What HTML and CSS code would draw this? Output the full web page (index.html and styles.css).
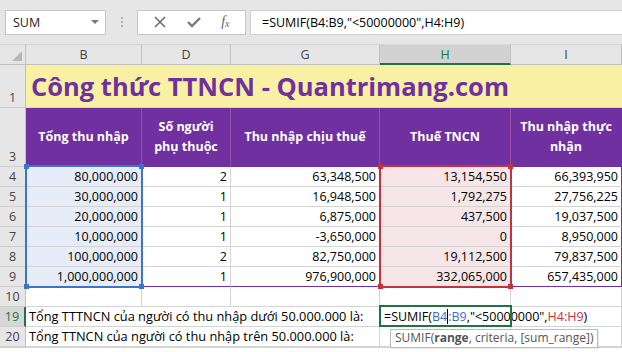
FILE: index.html
```html
<!DOCTYPE html>
<html lang="vi">
<head>
  <meta charset="UTF-8">
  <title>SUMIF - TTNCN</title>
  <link rel="stylesheet" href="styles.css">
</head>
<body>

<div class="formula-bar">
  <div class="name-box">
    <span>SUM</span>
    <span class="caret-down"></span>
  </div>
  <div class="grip"><i></i><i></i><i></i></div>
  <div class="fx-buttons">
    <svg class="btn-icon" width="14" height="14" viewBox="0 0 14 14"><path d="M2 2 L12 12 M12 2 L2 12" stroke="#6f6f6f" stroke-width="1.6" fill="none"/></svg>
    <svg class="btn-icon" width="16" height="14" viewBox="0 0 16 14"><path d="M2 7 L6 11 L14 3" stroke="#7a7a7a" stroke-width="2.4" fill="none"/></svg>
    <span class="fx">f<sub>x</sub></span>
  </div>
  <div class="formula-input">=SUMIF(B4:B9,"&lt;50000000",H4:H9)</div>
</div>

<div class="sheet">
  <!-- column headers -->
  <div class="corner"><span class="tri"></span></div>
  <div class="ch">B</div>
  <div class="ch">D</div>
  <div class="ch">G</div>
  <div class="ch ch-sel">H</div>
  <div class="ch">I</div>

  <!-- row 1 -->
  <div class="rh rh-tall">1</div>
  <div class="title">Công thức TTNCN - Quantrimang.com</div>

  <!-- row 3 -->
  <div class="rh rh-tall">3</div>
  <div class="hd">Tổng thu nhập</div>
  <div class="hd">Số người<br>phụ thuộc</div>
  <div class="hd">Thu nhập chịu thuế</div>
  <div class="hd">Thuế TNCN</div>
  <div class="hd hd-last">Thu nhập thực<br>nhận</div>

  <div class="rh">4</div>
  <div class="c num in-b">80,000,000</div>
  <div class="c num">2</div>
  <div class="c num">63,348,500</div>
  <div class="c num in-h">13,154,550</div>
  <div class="c num end">66,393,950</div>

  <div class="rh">5</div>
  <div class="c num in-b">30,000,000</div>
  <div class="c num">1</div>
  <div class="c num">16,948,500</div>
  <div class="c num in-h">1,792,275</div>
  <div class="c num end">27,756,225</div>

  <div class="rh">6</div>
  <div class="c num in-b">20,000,000</div>
  <div class="c num">1</div>
  <div class="c num">6,875,000</div>
  <div class="c num in-h">437,500</div>
  <div class="c num end">19,037,500</div>

  <div class="rh">7</div>
  <div class="c num in-b">10,000,000</div>
  <div class="c num">1</div>
  <div class="c num">-3,650,000</div>
  <div class="c num in-h">0</div>
  <div class="c num end">8,950,000</div>

  <div class="rh">8</div>
  <div class="c num in-b">100,000,000</div>
  <div class="c num">2</div>
  <div class="c num">82,750,000</div>
  <div class="c num in-h">19,112,500</div>
  <div class="c num end">79,837,500</div>

  <div class="rh">9</div>
  <div class="c num in-b">1,000,000,000</div>
  <div class="c num last">1</div>
  <div class="c num last">976,900,000</div>
  <div class="c num in-h">332,065,000</div>
  <div class="c num end last">657,435,000</div>

  <div class="rh">10</div>
  <div class="c"></div>
  <div class="c"></div>
  <div class="c"></div>
  <div class="c"></div>
  <div class="c"></div>

  <div class="rh rh-sel">19</div>
  <div class="c label">Tổng TTTNCN của người có thu nhập dưới 50.000.000 là:</div>
  <div class="c edit">=SUMIF(<span class="ref-b">B4</span><span class="cursor"></span><span class="ref-b">:B9</span>,"&lt;50000000",<span class="ref-h">H4:H9</span>)</div>

  <div class="rh">20</div>
  <div class="c label">Tổng TTNCN của người có thu nhập trên 50.000.000 là:</div>
  <div class="c"></div>
  <div class="c"></div>

  <div class="rh"></div>
  <div class="c"></div>
  <div class="c"></div>
  <div class="c"></div>
  <div class="c"></div>
  <div class="c"></div>

  <!-- range highlights drawn over the grid -->
  <div class="range range-b">
    <i class="h tl"></i><i class="h tr"></i><i class="h bl"></i><i class="h br"></i>
  </div>
  <div class="range range-h">
    <i class="h tl"></i><i class="h tr"></i><i class="h bl"></i><i class="h br"></i>
  </div>
  <div class="active-cell"></div>
  <div class="tip">SUMIF(<b>range</b>, criteria, [sum_range])</div>
</div>

</body>
</html>
```

FILE: styles.css
```css
body {
  margin: 0;
  width: 622px;
  height: 352px;
  overflow: hidden;
  background: #fff;
  font-family: "Open Sans", "Liberation Sans", sans-serif;
  font-size: 12px;
  color: #000;
}

/* formula bar */
.formula-bar {
  height: 44px;
  background: #e6e6e6;
  display: flex;
  align-items: center;
  padding: 0 0 0 5px;
  box-sizing: border-box;
}
.name-box {
  width: 101px;
  height: 25px;
  box-sizing: border-box;
  background: #fff;
  border: 1px solid #c6c6c6;
  display: flex;
  align-items: center;
  justify-content: space-between;
  padding: 0 6px 0 7px;
  font-size: 12.5px;
  color: #222;
}
.caret-down {
  width: 0;
  height: 0;
  border-left: 4px solid transparent;
  border-right: 4px solid transparent;
  border-top: 4px solid #777;
}
.grip {
  width: 31px;
  display: flex;
  flex-direction: column;
  align-items: center;
  gap: 2px;
}
.grip i {
  width: 2px;
  height: 2px;
  background: #b0b0b0;
}
.fx-buttons {
  width: 109px;
  height: 25px;
  box-sizing: border-box;
  background: #fff;
  border: 1px solid #c6c6c6;
  display: flex;
  align-items: center;
  justify-content: space-around;
  padding: 0 6px;
}
.fx {
  font-family: "Liberation Serif", serif;
  font-style: italic;
  font-size: 14px;
  color: #666;
}
.fx sub {
  font-size: 10px;
  vertical-align: -1px;
}
.formula-input {
  flex: 1;
  margin-left: 4px;
  height: 25px;
  box-sizing: border-box;
  background: #fff;
  border: 1px solid #d0d0d0;
  border-right: none;
  padding-left: 11px;
  display: flex;
  align-items: center;
  font-size: 12.5px;
}

/* sheet grid */
.sheet {
  position: relative;
  display: grid;
  grid-template-columns: 26px 116px 89px 149px 131px 111px;
  grid-template-rows: 21px 43px 59px repeat(9, 20px);
}
.corner,
.ch,
.rh {
  background: #e6e6e6;
  color: #444;
  box-sizing: border-box;
}
.corner {
  position: relative;
  border-right: 1px solid #c0c0c0;
  border-bottom: 1px solid #c0c0c0;
  border-top: 1px solid #d6d6d6;
}
.tri {
  position: absolute;
  right: 3px;
  bottom: 3px;
  width: 0;
  height: 0;
  border-left: 10px solid transparent;
  border-bottom: 10px solid #b8b8b8;
}
.ch {
  border-right: 1px solid #c0c0c0;
  border-bottom: 1px solid #c0c0c0;
  border-top: 1px solid #d6d6d6;
  display: flex;
  align-items: center;
  justify-content: center;
  font-size: 12.5px;
}
.ch-sel {
  background: #d2d2d2;
  color: #217346;
  border-bottom: 2px solid #217346;
}
.rh {
  border-right: 1px solid #c0c0c0;
  border-bottom: 1px solid #d0d0d0;
  display: flex;
  align-items: center;
  justify-content: center;
  font-size: 12.5px;
}
.rh-tall {
  align-items: flex-end;
  padding-bottom: 1px;
}
.rh-sel {
  background: #d6d6d6;
  color: #217346;
  border-right: 2px solid #217346;
}

.title {
  grid-column: span 5;
  background: #f8f0a3;
  color: #7030a0;
  font-weight: bold;
  font-size: 25.5px;
  line-height: 34px;
  padding: 4px 0 0 5px;
  border-bottom: 1px solid #d4d4d4;
  box-sizing: border-box;
  white-space: nowrap;
}
.hd {
  background: #7030a0;
  color: #fff;
  font-weight: bold;
  font-size: 12.5px;
  line-height: 20px;
  text-align: center;
  display: flex;
  align-items: center;
  justify-content: center;
  border-right: 1px solid #9550a8;
  box-sizing: border-box;
  padding-bottom: 1px;
}
.hd-last {
  border-right: 1px solid #7030a0;
}

.c {
  border-right: 1px solid #d4d4d4;
  border-bottom: 1px solid #d4d4d4;
  box-sizing: border-box;
  line-height: 19px;
  padding: 0 3px;
  white-space: nowrap;
  font-size: 12.5px;
}
.num {
  text-align: right;
}
.in-b {
  background: #e6edf8;
}
.in-h {
  background: #f7e6e7;
}
.end {
  border-right: 1px solid #7030a0;
}
.last {
  border-bottom: 1px solid #7030a0;
}
.label {
  grid-column: span 3;
  padding-left: 3px;
  font-size: 12.8px;
}
.edit {
  grid-column: span 2;
  padding-left: 4px;
}
.ref-b {
  color: #3a6ec6;
}
.ref-h {
  color: #c8323e;
}
.cursor {
  display: inline-block;
  width: 1px;
  height: 15px;
  background: #000;
  vertical-align: -3px;
}

/* overlays */
.range {
  position: absolute;
  box-sizing: border-box;
  border: 2px solid;
}
.range-b {
  left: 25px;
  top: 121px;
  width: 118px;
  height: 123px;
  border-color: #3d73c9;
}
.range-h {
  left: 379px;
  top: 121px;
  width: 133px;
  height: 123px;
  border-color: #c3323f;
}
.h {
  position: absolute;
  width: 5px;
  height: 5px;
}
.range-b .h {
  background: #3d73c9;
}
.range-h .h {
  background: #c3323f;
}
.h.tl { left: -3px; top: -3px; }
.h.tr { right: -3px; top: -3px; }
.h.bl { left: -3px; bottom: -3px; }
.h.br { right: -3px; bottom: -3px; }

.active-cell {
  position: absolute;
  left: 379px;
  top: 261px;
  width: 133px;
  height: 22px;
  box-sizing: border-box;
  border: 2px solid #217346;
}
.tip {
  position: absolute;
  left: 390px;
  top: 285px;
  height: 17px;
  padding: 0 4px;
  background: #fff;
  border: 1px solid #bcbcbc;
  color: #555;
  font-size: 12px;
  line-height: 16px;
  white-space: nowrap;
  box-shadow: 1px 1px 1px rgba(0, 0, 0, 0.08);
}
```
